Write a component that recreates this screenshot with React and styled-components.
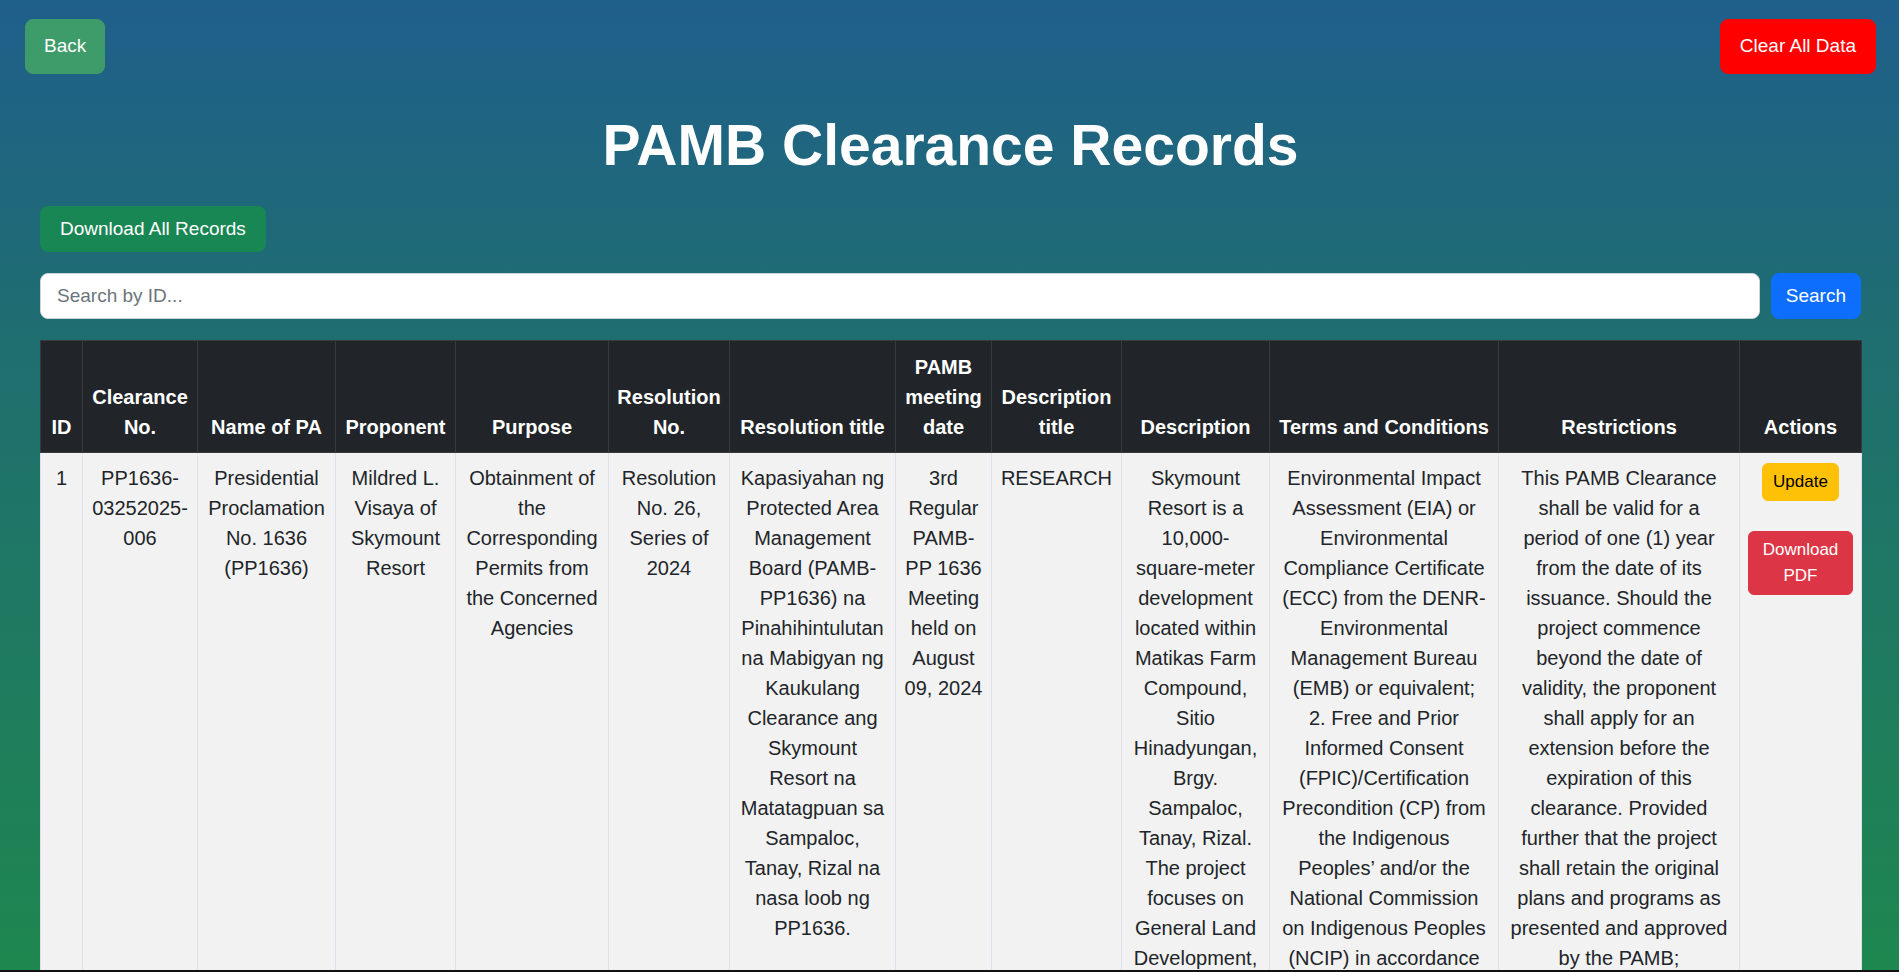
import React from 'react'
import styled, { createGlobalStyle } from 'styled-components'

const GlobalStyle = createGlobalStyle`
  html {
    scrollbar-width: none;
  }
  html::-webkit-scrollbar {
    display: none;
  }
  body {
    margin: 0;
    min-height: 100vh;
    font-family: "Liberation Sans", Arial, sans-serif;
    color: #212529;
    background: linear-gradient(to bottom, #1f5f8b 0%, #1f6e70 35%, #1e874f 100%) fixed;
  }
  body::after {
    content: "";
    position: fixed;
    left: 0;
    right: 0;
    bottom: 0;
    height: 2px;
    background: #111;
  }
`

const colors = {
  back: { bg: '#3e9b6a', fg: '#fff' },
  danger: { bg: '#ff0000', fg: '#fff' },
  success: { bg: '#198754', fg: '#fff' },
  primary: { bg: '#0d6efd', fg: '#fff' },
  warning: { bg: '#ffc107', fg: '#000' },
  red: { bg: '#dc3545', fg: '#fff' },
}

const TopBar = styled.div`
  display: flex;
  justify-content: space-between;
  align-items: flex-start;
  padding: 19px 23px 0 25px;
`

const Button = styled.button`
  font-family: inherit;
  font-size: 19px;
  line-height: 28.5px;
  padding: ${p => p.$pad || '12px 18px'};
  border: 1px solid ${p => colors[p.$kind].bg};
  background: ${p => colors[p.$kind].bg};
  color: ${p => colors[p.$kind].fg};
  border-radius: 8px;
  cursor: pointer;
`

const Container = styled.div`
  padding: 0 38px 0 40px;
`

const Title = styled.h1`
  margin: 37px 0 27px;
  text-align: center;
  color: #fff;
  font-size: 57px;
  line-height: 1.2;
  font-weight: 700;
`

const SearchRow = styled.div`
  display: flex;
  gap: 11px;
  margin: 21px 0 21px;
`

const SearchInput = styled.input`
  flex: 1;
  height: 46px;
  box-sizing: border-box;
  padding: 0 16px;
  font-family: inherit;
  font-size: 19px;
  color: #212529;
  background: #fff;
  border: 1px solid #ced4da;
  border-radius: 8px;
  outline: none;
  &::placeholder {
    color: #6c757d;
  }
`

const Table = styled.table`
  width: 100%;
  table-layout: fixed;
  border-collapse: collapse;
  font-size: 20px;
  line-height: 30px;
`

const Col = styled.col`
  width: ${p => p.$w}px;
`

const Th = styled.th`
  background: #212529;
  color: #fff;
  font-weight: 700;
  text-align: center;
  vertical-align: bottom;
  padding: 11px 8px 10px;
  border: 1px solid #373b3e;
`

const Td = styled.td`
  background: #f2f2f2;
  color: #212529;
  text-align: center;
  vertical-align: top;
  padding: 10px 8px;
  border: 1px solid #dee2e6;
`

const Line = styled.span`
  display: block;
  white-space: nowrap;
`

const Actions = styled.div`
  display: flex;
  flex-direction: column;
  align-items: center;
  gap: 30px;
`

const SmallButton = styled.button`
  font-family: inherit;
  font-size: 17px;
  line-height: 26px;
  padding: 5px 10px;
  border: 1px solid ${p => colors[p.$kind].bg};
  background: ${p => colors[p.$kind].bg};
  color: ${p => colors[p.$kind].fg};
  border-radius: 6px;
  cursor: pointer;
`

const widths = [42, 115, 138, 120, 153, 121, 166, 96, 130, 148, 229, 241, 122]

const headers = [
  ['ID'],
  ['Clearance', 'No.'],
  ['Name of PA'],
  ['Proponent'],
  ['Purpose'],
  ['Resolution', 'No.'],
  ['Resolution title'],
  ['PAMB', 'meeting', 'date'],
  ['Description', 'title'],
  ['Description'],
  ['Terms and Conditions'],
  ['Restrictions'],
  ['Actions'],
]

const record = [
  ['1'],
  ['PP1636-', '03252025-', '006'],
  ['Presidential', 'Proclamation', 'No. 1636', '(PP1636)'],
  ['Mildred L.', 'Visaya of', 'Skymount', 'Resort'],
  ['Obtainment of', 'the', 'Corresponding', 'Permits from', 'the Concerned', 'Agencies'],
  ['Resolution', 'No. 26,', 'Series of', '2024'],
  ['Kapasiyahan ng', 'Protected Area', 'Management', 'Board (PAMB-', 'PP1636) na', 'Pinahihintulutan', 'na Mabigyan ng', 'Kaukulang', 'Clearance ang', 'Skymount', 'Resort na', 'Matatagpuan sa', 'Sampaloc,', 'Tanay, Rizal na', 'nasa loob ng', 'PP1636.'],
  ['3rd', 'Regular', 'PAMB-', 'PP 1636', 'Meeting', 'held on', 'August', '09, 2024'],
  ['RESEARCH'],
  ['Skymount', 'Resort is a', '10,000-', 'square-meter', 'development', 'located within', 'Matikas Farm', 'Compound,', 'Sitio', 'Hinadyungan,', 'Brgy.', 'Sampaloc,', 'Tanay, Rizal.', 'The project', 'focuses on', 'General Land', 'Development,', 'Agriculture', 'and Research.'],
  ['Environmental Impact', 'Assessment (EIA) or', 'Environmental', 'Compliance Certificate', '(ECC) from the DENR-', 'Environmental', 'Management Bureau', '(EMB) or equivalent;', '2. Free and Prior', 'Informed Consent', '(FPIC)/Certification', 'Precondition (CP) from', 'the Indigenous', 'Peoples’ and/or the', 'National Commission', 'on Indigenous Peoples', '(NCIP) in accordance', 'with the IPRA;'],
  ['This PAMB Clearance', 'shall be valid for a', 'period of one (1) year', 'from the date of its', 'issuance. Should the', 'project commence', 'beyond the date of', 'validity, the proponent', 'shall apply for an', 'extension before the', 'expiration of this', 'clearance. Provided', 'further that the project', 'shall retain the original', 'plans and programs as', 'presented and approved', 'by the PAMB;'],
]

const Lines = ({ lines }) => lines.map((l, i) => <Line key={i}>{l}</Line>)

export default function App() {
  return (
    <>
      <GlobalStyle />
      <TopBar>
        <Button $kind="back">Back</Button>
        <Button $kind="danger" $pad="12px 19px">Clear All Data</Button>
      </TopBar>

      <Container>
        <Title>PAMB Clearance Records</Title>

        <Button $kind="success" $pad="8px 19px">Download All Records</Button>

        <SearchRow>
          <SearchInput placeholder="Search by ID..." />
          <Button $kind="primary" $pad="0 14px">Search</Button>
        </SearchRow>

        <Table>
          <colgroup>
            {widths.map((w, i) => <Col key={i} $w={w} />)}
          </colgroup>
          <thead>
            <tr>
              {headers.map((h, i) => (
                <Th key={i}><Lines lines={h} /></Th>
              ))}
            </tr>
          </thead>
          <tbody>
            <tr>
              {record.map((c, i) => (
                <Td key={i}><Lines lines={c} /></Td>
              ))}
              <Td>
                <Actions>
                  <SmallButton $kind="warning">Update</SmallButton>
                  <SmallButton $kind="red">Download PDF</SmallButton>
                </Actions>
              </Td>
            </tr>
          </tbody>
        </Table>
      </Container>
    </>
  )
}
